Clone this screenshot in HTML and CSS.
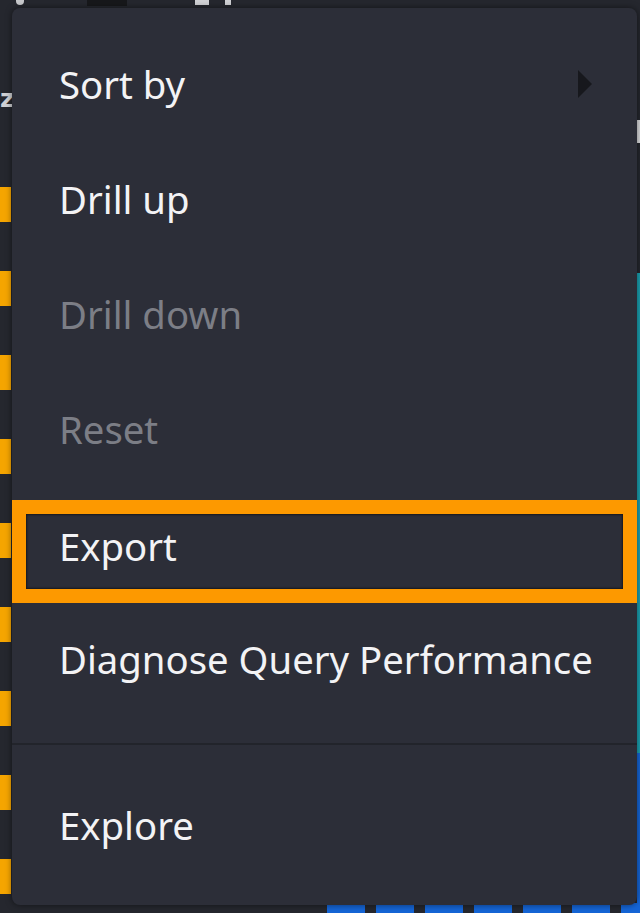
FILE: index.html
```html
<!DOCTYPE html>
<html>
<head>
<meta charset="utf-8">
<link rel="stylesheet" href="styles.css">
</head>
<body>
<div class="chart">
  <div class="topstrip">
    <span class="dot"></span>
    <span class="blk"></span>
    <span class="glyph"></span>
  </div>
  <div class="axis">
    <span class="zlabel">z</span>
    <div class="bars">
      <span class="bar"></span><span class="bar"></span><span class="bar"></span>
      <span class="bar"></span><span class="bar"></span><span class="bar"></span>
      <span class="bar"></span><span class="bar"></span><span class="bar"></span>
    </div>
  </div>
  <div class="rightstrip">
    <span class="tick"></span>
    <span class="teal"></span>
    <span class="blue"></span>
  </div>
  <div class="bottombars">
    <span class="col"></span><span class="col"></span><span class="col"></span>
    <span class="col"></span><span class="col"></span><span class="col"></span>
    <span class="col"></span>
  </div>

  <div class="menu">
    <div class="group">
      <div class="item">Sort by
        <svg class="arrow" width="14" height="28" viewBox="0 0 14 28"><path d="M0 0 L14 14 L0 28 Z" fill="#17181d"/></svg>
      </div>
      <div class="item">Drill up</div>
      <div class="item disabled">Drill down</div>
      <div class="item disabled">Reset</div>
      <div class="item selected">Export</div>
      <div class="item">Diagnose Query Performance</div>
    </div>
    <div class="group">
      <div class="item">Explore</div>
    </div>
  </div>
</div>
</body>
</html>
```
FILE: styles.css
```css
html, body {
  margin: 0;
  padding: 0;
  width: 640px;
  height: 913px;
  overflow: hidden;
  background: #25272e;
}
.chart {
  position: relative;
  width: 640px;
  height: 913px;
}
.topstrip {
  display: flex;
  align-items: flex-start;
  height: 10px;
}
.dot {
  width: 8px; height: 5px;
  margin-left: 16px;
  background: #c8c9cc;
  border-radius: 0 0 4px 4px;
}
.blk {
  width: 40px; height: 6px;
  margin-left: 63px;
  background: #17181b;
}
.glyph {
  width: 44px; height: 5px;
  margin-left: 68px;
  background: linear-gradient(90deg, #d0d1d4 0 14px, transparent 14px 30px, #d0d1d4 30px 36px, transparent 36px);
}
.axis {
  position: absolute;
  left: 0; top: 0;
  width: 12px;
  height: 913px;
}
.zlabel {
  position: absolute;
  left: 0; top: 84px;
  font: bold 25px "DejaVu Sans", sans-serif;
  line-height: 30px;
  color: #d0d1d4;
}
.bars {
  display: flex;
  flex-direction: column;
  gap: 49px;
  padding-top: 187px;
}
.bar {
  display: block;
  width: 11px;
  height: 35px;
  background: #f5a500;
  box-shadow: 0 42px 0 -17px rgba(255,255,255,0.06);
}
.rightstrip {
  position: absolute;
  right: 0; top: 0;
  width: 3px;
  height: 913px;
  display: flex;
  flex-direction: column;
}
.tick { height: 23px; margin-top: 120px; background: #d9dadc; }
.teal { height: 480px; margin-top: 130px; background: #1aa0b0; }
.blue { flex: 1; background: #1565d6; }
.bottombars {
  position: absolute;
  left: 327px; bottom: 0;
  display: flex;
  gap: 11px;
}
.col {
  width: 38px;
  height: 10px;
  background: #1565d6;
}
.menu {
  position: absolute;
  left: 12px; top: 8px;
  width: 625px;
  height: 897px;
  box-sizing: border-box;
  background: #2c2e38;
  border-radius: 8px;
  box-shadow: 0 0 6px rgba(0,0,0,0.5);
  font-family: "Noto Sans", "Open Sans", sans-serif;
  font-size: 38.3px;
  color: #f3f3f5;
}
.group {
  padding: 18px 0 27px;
}
.group + .group {
  border-top: 2px solid #22242b;
  padding: 22px 0 0;
}
.item {
  position: relative;
  height: 115px;
  box-sizing: border-box;
  display: flex;
  align-items: center;
  padding-left: 47px;
}
.item.disabled { color: #7c7e86; }
.item.selected {
  height: 103px;
  margin: 14px 0 -2px;
  border: 14px solid #fd9900;
  padding-left: 33px;
  padding-bottom: 12px;
  box-shadow: inset 0 0 2px 1px rgba(0,0,0,0.5);
}
.arrow {
  position: absolute;
  left: 566px;
  top: 44px;
}
```
